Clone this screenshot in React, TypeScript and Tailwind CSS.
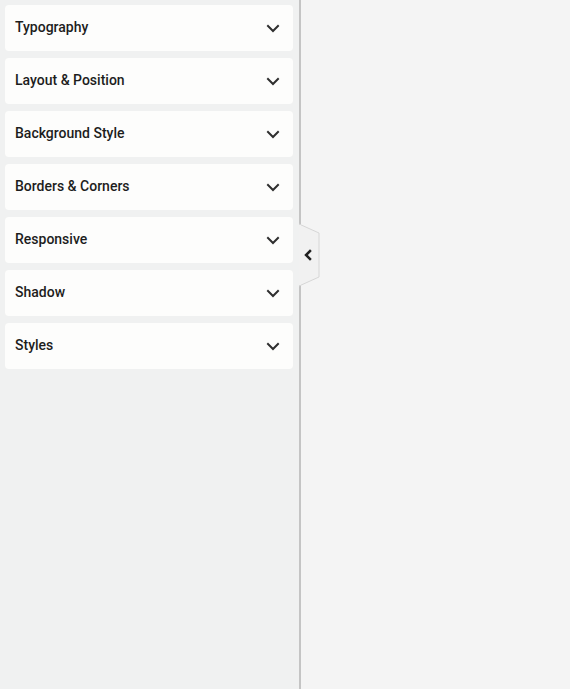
import React from 'react';

const sections = [
  'Typography',
  'Layout & Position',
  'Background Style',
  'Borders & Corners',
  'Responsive',
  'Shadow',
  'Styles',
];

const ChevronDown = () => (
  <svg width="14" height="14" viewBox="0 0 14 14" fill="none">
    <path d="M2 5 L7 10 L12 5" stroke="#2f2f2f" strokeWidth="2" strokeLinecap="square" />
  </svg>
);

export default function App() {
  return (
    <div
      className="flex h-[689px] w-[570px] bg-[#f4f4f4]"
      style={{ fontFamily: 'Roboto, "Liberation Sans", sans-serif' }}
    >
      {/* Sidebar */}
      <div className="relative w-[301px] shrink-0 border-r-2 border-r-[#c4c4c4] bg-[#f0f1f1]">
        <div className="flex flex-col gap-[7px] py-[5px] pl-[5px] pr-[6px]">
          {sections.map((s) => (
            <button
              key={s}
              className="flex h-[46px] items-center justify-between rounded-[4px] bg-[#fdfdfc] pl-[10px] pr-[13px] text-left"
            >
              <span className="mb-[2px] text-[14px] font-medium text-[#1d1d1d]">{s}</span>
              <ChevronDown />
            </button>
          ))}
        </div>

        {/* Collapse tab */}
        <div className="absolute left-[299px] top-[222px] h-[66px] w-[24px]">
          <svg width="24" height="66" viewBox="0 0 24 66">
            <path d="M0 2 L20 11 L20 55 L0 64 Z" fill="#f1f1f1" stroke="#d6d6d6" strokeWidth="1" />
            <rect x="0" y="3" width="2" height="60" fill="#f1f1f1" />
            <path d="M11 29 L7 33 L11 37" stroke="#222" strokeWidth="2.5" fill="none" strokeLinecap="square" />
          </svg>
        </div>
      </div>
      <div className="flex-1" />
    </div>
  );
}
